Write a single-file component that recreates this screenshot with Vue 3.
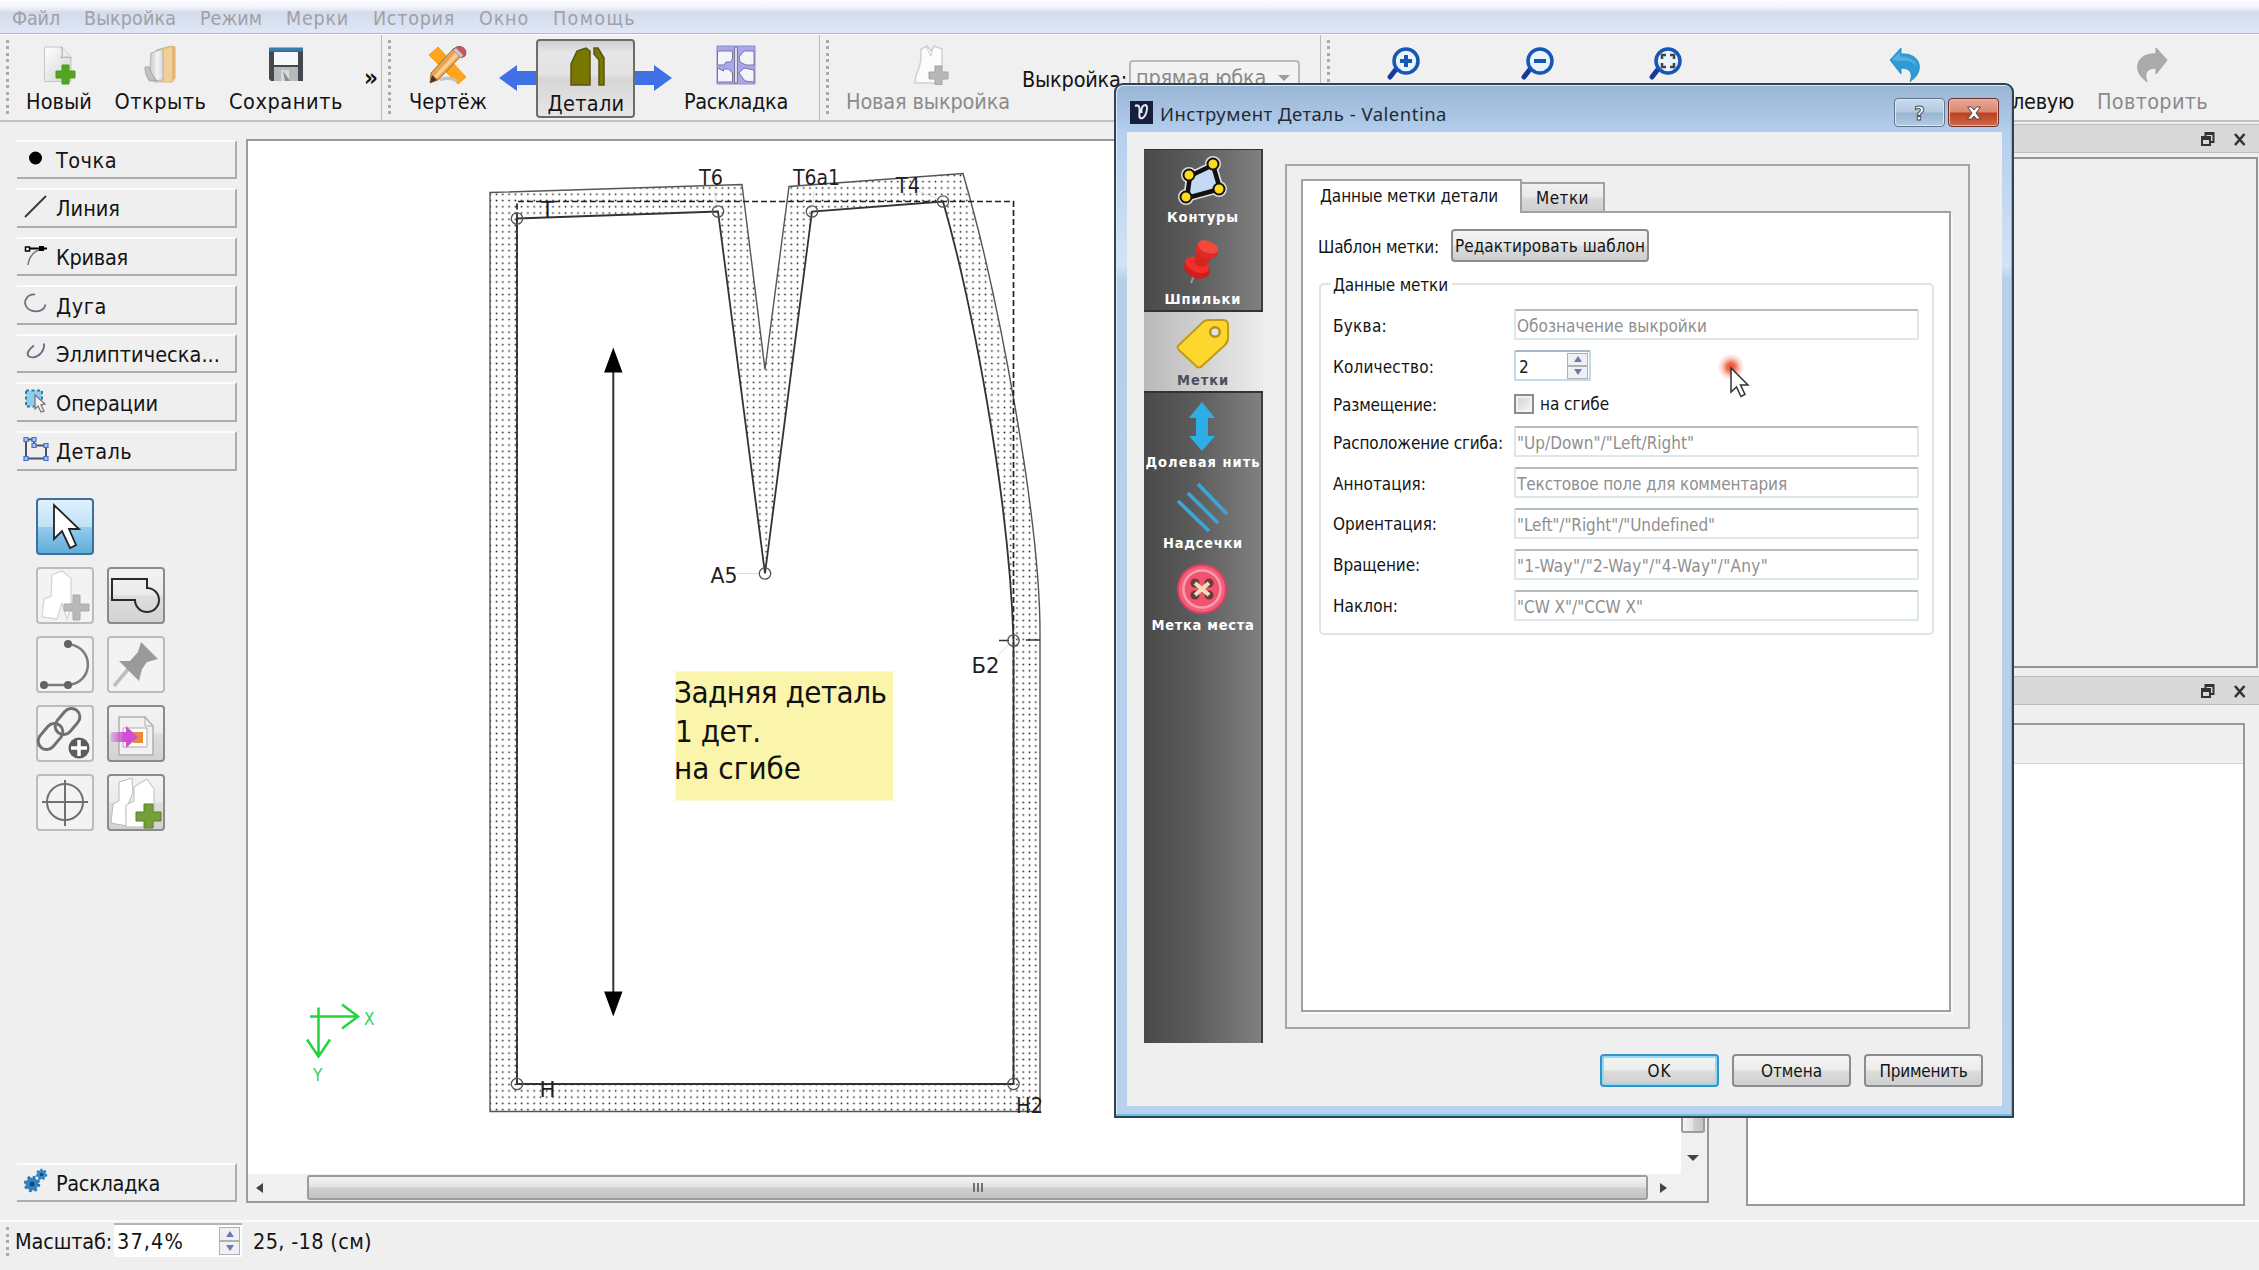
<script setup>
// Spreads the letters of a label so that it takes the given width.
const vFit = {
  mounted(el, { value }) {
    const range = document.createRange()
    range.selectNodeContents(el)
    const natural = range.getBoundingClientRect().width
    const n = el.textContent.length
    el.style.letterSpacing = ((value + 2 - natural) / Math.max(n, 1)).toFixed(3) + 'px'
  },
}

const menus = [
  ['Файл', 46], ['Выкройка', 90], ['Режим', 60], ['Мерки', 61],
  ['История', 80], ['Окно', 48], ['Помощь', 81],
]

const groups = [
  { id: 'point', label: 'Точка', w: 59 },
  { id: 'line', label: 'Линия', w: 62 },
  { id: 'curve', label: 'Кривая', w: 70 },
  { id: 'arc', label: 'Дуга', w: 49 },
  { id: 'ellipse', label: 'Эллиптическа...', w: 162 },
  { id: 'ops', label: 'Операции', w: 100 },
  { id: 'detail', label: 'Деталь', w: 74 },
]

const pages = [
  { id: 'paths', label: 'Контуры', w: 70 },
  { id: 'pins', label: 'Шпильки', w: 75 },
  { id: 'labels', label: 'Метки', w: 50, active: true },
  { id: 'grain', label: 'Долевая нить', w: 113 },
  { id: 'passmarks', label: 'Надсечки', w: 78 },
  { id: 'place', label: 'Метка места', w: 101 },
]

const fields = [
  { label: 'Расположение сгиба:', w: 168, hint: '"Up/Down"/"Left/Right"', hw: 175 },
  { label: 'Аннотация:', w: 91, hint: 'Текстовое поле для комментария', hw: 268 },
  { label: 'Ориентация:', w: 102, hint: '"Left"/"Right"/"Undefined"', hw: 196 },
  { label: 'Вращение:', w: 85, hint: '"1-Way"/"2-Way"/"4-Way"/"Any"', hw: 249 },
  { label: 'Наклон:', w: 63, hint: '"CW X"/"CCW X"', hw: 124 },
]

const outer = 'M490 192L742 184L765 369L789 186L963 173C1000 300 1040 520 1040 632V1111H490Z'
const inner = 'M517 218L718 211L765 573L812 211L943 201C970 295 1009 490 1013.500 640V1083.500H517Z'
const nodes = [[517, 218], [718, 211], [765, 573], [812, 211], [943, 201], [1013.5, 640], [1013.5, 1083.5], [517, 1083.5]]
const tags = [
  ['Т6', 699, 184.5, 24], ['Т6а1', 793, 184, 47], ['Т4', 896, 192, 24], ['Т', 541, 216.5, 13],
  ['А5', 710.5, 582, 27], ['Б2', 971.5, 672, 28], ['Н', 539.5, 1096, 16], ['Н2', 1016, 1112, 27],
]
</script>

<template>
  <div class="app">
    <nav class="menubar">
      <span v-for="[m, w] in menus" :key="m" v-fit="w" :style="{ width: w + 'px' }">{{ m }}</span>
    </nav>

    <header class="toolbar">
      <section class="bar bar-file">
        <i class="grip"></i>
        <div class="tool t-new">
          <svg width="40" height="40" viewBox="0 0 40 40">
            <defs>
              <linearGradient id="paper" x1="0" y1="0" x2="1" y2="1"><stop offset="0" stop-color="#fff" /><stop offset="1" stop-color="#cfd2d3" /></linearGradient>
              <linearGradient id="folder" x1="0" y1="0" x2="1" y2="0"><stop offset="0" stop-color="#f6d9a6" /><stop offset="1" stop-color="#e2b26c" /></linearGradient>
              <linearGradient id="sheets" x1="0" y1="0" x2="1" y2="0"><stop offset="0" stop-color="#c2c4c5" /><stop offset="0.600" stop-color="#f4f4f2" /><stop offset="1" stop-color="#d8d8d6" /></linearGradient>
            </defs>
            <path d="M5.500 2h17.500l9 10v24.500h-26.500z" fill="url(#paper)" stroke="#c4c6c6" />
            <path d="M22.500 2c1.500 5 1 8.500-.5 11 3-1 7-1.500 10.500 0" fill="#eee" stroke="#a5a7a7" />
            <path d="M23 20h7v6h6v7h-6v6h-7v-6h-6v-7h6z" fill="#52a51f" stroke="#4a9a1d" />
          </svg>
          <span v-fit="64">Новый</span>
        </div>
        <div class="tool t-open">
          <svg width="40" height="40" viewBox="0 0 40 40">
            <path d="M16 5l15-4 4 1v31l-3 4H14z" fill="url(#folder)" stroke="#dcb47c" />
            <path d="M11 8l12-4v31l-14 1z" fill="url(#sheets)" stroke="#b5b5b5" />
            <path d="M5 22h4l3 7 5 7-8-1c-3-4-4-8-4-13z" fill="#bfc1c2" stroke="#a5a5a5" />
            <path d="M24 5l8-3v34l-8 1z" fill="#f0cf98" />
          </svg>
          <span v-fit="90">Открыть</span>
        </div>
        <div class="tool t-save">
          <svg width="40" height="40" viewBox="0 0 40 40">
            <path d="M3 3h34v33h-32l-2-2z" fill="#43484f" />
            <path d="M3 2.500h34v4h-34z" fill="#3c7ba8" />
            <path d="M8 7h24v13h-24z" fill="#f7f8fb" />
            <path d="M8 22h24v14h-24z" fill="#b7babb" />
            <path d="M15 25h8v11h-8z" fill="#d8dada" /><path d="M17 26l7 10h-5z" fill="#8b8e90" />
          </svg>
          <span v-fit="112">Сохранить</span>
        </div>
        <b class="more">»</b>
      </section>

      <section class="bar bar-mode">
        <i class="grip"></i>
        <div class="tool t-draw">
          <svg width="40" height="40" viewBox="0 0 40 40">
            <path d="M10 2l28 30-8 7-29-29z" fill="#ffa51f" stroke="#f59a1a" />
            <path d="M12 35c6-3 12-2 17 1" fill="none" stroke="#c4c4c4" stroke-width="3" />
            <path d="M3 28l23-25 8 7-24 25-8 3z" fill="#e9a250" stroke="#8a6130" stroke-width=".8" />
            <path d="M6 31l23-25 3 3-23 24z" fill="#f8cf8c" />
            <path d="M2 38l2-8 5 5z" fill="#4c3327" />
            <path d="M27 3c4-4 14 0 10 8l-4 2-8-8z" fill="#c9545c" stroke="#a0505c" />
            <path d="M25 5l3-2 7 7-2 3z" fill="#c4c8d2" />
          </svg>
          <span v-fit="76">Чертёж</span>
        </div>
        <svg class="arrow a-left" width="37" height="26" viewBox="0 0 37 26"><path d="M0 13L18 0v6h19v14H18v6z" fill="#4070e5" /></svg>
        <div class="tool checked">
          <svg width="40" height="40" viewBox="0 0 40 40">
            <path d="M3 38V17L9 4l9-3 4 3v34zM26 1h4l6 10v27h-5V13l-5-6z" fill="#787800" stroke="#55561a" stroke-width="1.500" />
          </svg>
          <span v-fit="75">Детали</span>
        </div>
        <svg class="arrow" width="37" height="26" viewBox="0 0 37 26"><path d="M37 13L19 0v6H0v14h19v6z" fill="#4070e5" /></svg>
        <div class="tool t-layout">
          <svg width="40" height="40" viewBox="0 0 40 40">
            <path d="M1 1h38v38H1z" fill="#a9a5f2" stroke="#8f8cc8" />
            <g fill="#f4f4fa" stroke="#777893">
              <path d="M1.500 6h15v8l-2 3H10l-2 3H1.500zM1.500 23l6 3v-2h5l4 4v9H1.500zM23 12l5-6h10v14h-8l-6-3zM23 28l5-5 10 2v12l-9-1-3-4z" />
              <path d="M18.500 2h3v36h-3z" fill="#ddd" />
            </g>
          </svg>
          <span v-fit="102">Раскладка</span>
        </div>
      </section>

      <section class="bar bar-draw">
        <i class="grip"></i>
        <div class="tool t-piece off">
          <svg width="40" height="40" viewBox="0 0 40 40">
            <path d="M10 4l6-3 4 5 3-5 8 3v18l-6 16H4l1-8c4-6 3-10 5-14z" fill="#fcfcfc" stroke="#d0d0d0" stroke-width="1.500" />
            <path d="M15 2l5 9 2-9" fill="none" stroke="#ccc" />
            <path d="M24 21h7v6h6v7h-6v6h-7v-6h-6v-7h6z" fill="#b7b7b7" stroke="#a3a3a3" />
          </svg>
          <span v-fit="162">Новая выкройка</span>
        </div>
        <span class="pick" v-fit="103">Выкройка:</span>
        <div class="combo"><span v-fit="128">прямая юбка</span><i class="tri-down"></i></div>
      </section>

      <section class="bar bar-zoom">
        <i class="grip"></i>
        <div class="tool z-in">
          <svg width="40" height="40" viewBox="0 0 40 40">
            <path d="M13 23L6 32" stroke="#153a97" stroke-width="5" stroke-linecap="round" />
            <circle cx="22" cy="16" r="12" fill="#e9f3fc" stroke="#1757b4" stroke-width="3.500" />
            <path d="M22 10v12M16 16h12" stroke="#1757b4" stroke-width="4" />
          </svg>
        </div>
        <div class="tool z-out">
          <svg width="40" height="40" viewBox="0 0 40 40">
            <path d="M13 23L6 32" stroke="#153a97" stroke-width="5" stroke-linecap="round" />
            <circle cx="22" cy="16" r="12" fill="#e9f3fc" stroke="#1757b4" stroke-width="3.500" />
            <path d="M16 16h12" stroke="#1757b4" stroke-width="4" />
          </svg>
        </div>
        <div class="tool z-fit">
          <svg width="40" height="40" viewBox="0 0 40 40">
            <path d="M13 23L6 32" stroke="#153a97" stroke-width="5" stroke-linecap="round" />
            <circle cx="22" cy="16" r="12" fill="#e9f3fc" stroke="#1757b4" stroke-width="3.500" />
            <path d="M16 14v-4h4M24 10h4v4M28 18v4h-4M20 22h-4v-4" fill="none" stroke="#444" stroke-width="2.500" />
          </svg>
        </div>
        <div class="tool undo">
          <svg width="40" height="40" viewBox="0 0 40 40">
            <path d="M5 15L16 3v6c13-1 20 7 18 16-2 7-5 8-9 12 3-8 1-14-9-14v6z" fill="#2f9bd6" stroke="#2b8fc8" />
            <path d="M7 15l8-8v5c9-1 15 4 17 9-5-5-10-6-17-5z" fill="#55b0e0" />
          </svg>
        </div>
        <div class="tool next"><span v-fit="60">левую</span></div>
        <div class="tool off redo">
          <svg width="40" height="40" viewBox="0 0 40 40">
            <path d="M35 15L24 3v6C11 8 4 16 6 25c2 7 5 8 9 12-3-8-1-14 9-14v6z" fill="#ababab" stroke="#a0a0a0" />
          </svg>
          <span v-fit="109">Повторить</span>
        </div>
      </section>
    </header>

    <main class="work">
      <aside class="tools">
        <div v-for="g in groups" :key="g.id" class="group">
          <svg width="26" height="26" viewBox="0 0 26 26" fill="none">
            <circle v-if="g.id === 'point'" cx="12.500" cy="13" r="6.500" fill="#000" />
            <path v-else-if="g.id === 'line'" d="M2 24L23 3" stroke="#333" stroke-width="1.800" />
            <g v-else-if="g.id === 'curve'">
              <path d="M4 6.500h20" stroke="#000" stroke-width="2" /><path d="M5 23c1-7 5-14 14-16" stroke="#777" stroke-width="1.500" />
              <path d="M2.500 5h4v4h-4z" fill="#fff" stroke="#000" stroke-width="1.500" /><path d="M16 4h5v5h-5z" fill="#000" />
            </g>
            <path v-else-if="g.id === 'arc'" d="M12 3.500C4 3 1 10 2.500 14c3 8 18 9 20-.5" stroke="#66707f" stroke-width="1.700" />
            <path v-else-if="g.id === 'ellipse'" d="M11 6.500C5 11 3 15 6 17.500c6 3 16-3 15-13" stroke="#66748a" stroke-width="1.900" />
            <g v-else-if="g.id === 'ops'">
              <path d="M3 2.500h16v16H3z" fill="#8dcdee" stroke="#2c7ea6" stroke-width="2" stroke-dasharray="3 2.500" />
              <path d="M12 7l10 9-4 1 3 6-3 1-3-6-3 3z" fill="#f2f2f2" stroke="#777" stroke-width="1.300" />
            </g>
            <g v-else>
              <path d="M3 3.500h8v6h12v13H3z" stroke="#4c5264" stroke-width="2" />
              <path d="M1 1.500h4v4H1zM9 1.500h4v4H9zM9 7.500h4v4H9zM21 7.500h4v4h-4zM21 20.500h4v4h-4zM1 20.500h4v4H1z" fill="#a9c8ff" stroke="#3b6fd4" stroke-width="1.200" />
            </g>
          </svg>
          <span v-fit="g.w">{{ g.label }}</span>
        </div>

        <div class="palette">
          <div class="cell on">
            <svg width="58" height="57" viewBox="0 0 58 57"><path d="M18 7v34l8-8 8 17 6-3-7-16h10z" fill="#fff" stroke="#222" stroke-width="1.800" /></svg>
          </div>
          <i></i>
          <div class="cell dis">
            <svg width="58" height="57" viewBox="0 0 58 57">
              <path d="M16 8l10-4 9 7v30l-4 11-5-16-5 16-15-2 2-18 7-3z" fill="#fff" stroke="#d5d5d5" stroke-width="1.300" />
              <path d="M37 28h7v9h9v7h-9v9h-7v-9h-9v-7h9z" fill="#b9b9b9" stroke="#aaa" />
            </svg>
          </div>
          <div class="cell">
            <svg width="58" height="57" viewBox="0 0 58 57"><path d="M5 12h35v9a12 12 0 1 1-12 12H5z" fill="none" stroke="#2a2a2a" stroke-width="2" /></svg>
          </div>
          <div class="cell dis">
            <svg width="58" height="57" viewBox="0 0 58 57">
              <path d="M7 49h25c26-2 27-38 0-41" fill="none" stroke="#7d7d7d" stroke-width="2.500" />
              <circle cx="8" cy="49" r="4" fill="#636363" /><circle cx="32" cy="49" r="4" fill="#636363" /><circle cx="32" cy="8" r="4" fill="#636363" />
            </svg>
          </div>
          <div class="cell dis">
            <svg width="58" height="57" viewBox="0 0 58 57">
              <path d="M7 50l16-19" stroke="#bdbdbd" stroke-width="3.500" />
              <path d="M34 6l17 17-11 3-5 7-3 12L12 25h11l8-9z" fill="#9a9a9a" />
            </svg>
          </div>
          <div class="cell dis">
            <svg width="58" height="57" viewBox="0 0 58 57" fill="none" stroke="#707070" stroke-width="3">
              <rect x="17" y="8" width="29" height="17" rx="8.500" transform="rotate(-50 31.500 16.500)" />
              <rect x="0" y="23" width="29" height="17" rx="8.500" transform="rotate(-50 14.500 31.500)" />
              <circle cx="43" cy="43" r="10.500" fill="#5c5c5c" stroke="none" />
              <path d="M43 35v16M35 43h16" stroke="#fff" stroke-width="3.500" />
            </svg>
          </div>
          <div class="cell">
            <svg width="58" height="57" viewBox="0 0 58 57">
              <defs><linearGradient id="import" x1="0" y1="0" x2="1" y2="0"><stop offset="0" stop-color="#cf4fd0" stop-opacity="0.300" /><stop offset="0.500" stop-color="#cf4fd0" /></linearGradient></defs>
              <path d="M12 12h26l8 9v29H12z" fill="#f1f1f1" stroke="#b0b0b0" stroke-width="1.500" /><path d="M38 12v9h8" fill="none" stroke="#aaa" />
              <path d="M16 23h24v19H16z" fill="#fff" stroke="#aaa" /><path d="M26 27h10v11H26z" fill="#e88a3a" />
              <path d="M4 27h15v-6l12 11-12 11v-6H4z" fill="url(#import)" />
            </svg>
          </div>
          <div class="cell dis">
            <svg width="58" height="57" viewBox="0 0 58 57" fill="none" stroke="#707070" stroke-width="2"><circle cx="29" cy="28" r="18" /><path d="M29 6v46M6 28h46" /></svg>
          </div>
          <div class="cell">
            <svg width="58" height="57" viewBox="0 0 58 57">
              <path d="M12 8l13-4 1 14-7 18 1 16-16-3 2-19 6-3z" fill="#fff" stroke="#bbb" />
              <path d="M27 13l13-8 7 10v38H19V31l8-4z" fill="#fff" stroke="#bbb" />
              <path d="M37 30h9v8h8v9h-8v7h-9v-7h-8v-9h8z" fill="#74a03a" stroke="#58802a" />
            </svg>
          </div>
        </div>

        <div class="group last">
          <svg width="26" height="26" viewBox="0 0 26 26">
            <circle cx="9" cy="16" r="6.500" fill="#2f86cb" stroke="#2a78b8" stroke-width="3.500" stroke-dasharray="2.600 2.500" />
            <circle cx="9" cy="16" r="2.500" fill="#27455f" />
            <circle cx="18.500" cy="6.500" r="4.500" fill="#3a8ccb" stroke="#2f7fbd" stroke-width="2.500" stroke-dasharray="2 1.900" />
            <circle cx="18.500" cy="6.500" r="1.700" fill="#27455f" />
          </svg>
          <span v-fit="102">Раскладка</span>
        </div>
      </aside>

      <section class="canvas">
        <svg class="scene" width="1433" height="1033" viewBox="248 140.500 1433 1033">
          <defs>
            <pattern id="dots" x="493.400" y="190.600" width="6.270" height="6.270" patternUnits="userSpaceOnUse">
              <rect x="2.400" y="2.400" width="1.500" height="1.500" fill="#111" />
            </pattern>
          </defs>
          <path :d="outer + inner" fill="url(#dots)" fill-rule="evenodd" />
          <path :d="outer" fill="none" stroke="#555" stroke-width="1.400" />
          <path d="M517 218V201H1013.500V1083.500H517V218" fill="none" stroke="#222" stroke-width="1.700" stroke-dasharray="6 3" />
          <path :d="inner" fill="none" stroke="#333" stroke-width="1.800" />
          <path d="M737 573h22M998 655l11-11M714 190l3 15M814 190l-1 15M917 190l20 8" stroke="#ddd" />
          <path d="M999 640h10M1026 639.500h14" stroke="#333" stroke-width="1.500" />
          <circle v-for="(n, i) in nodes" :key="i" :cx="n[0]" :cy="n[1]" r="5.700" fill="none" stroke="#555" stroke-width="1.300" />
          <path d="M613.300 369V994" stroke="#333" stroke-width="2" />
          <path d="M613.300 347l9.200 25h-18.400zM613.300 1016l9.200-25h-18.400z" />
          <text v-for="t in tags" :key="t[0]" :x="t[1]" :y="t[2]" :textLength="t[3]" lengthAdjust="spacingAndGlyphs" class="tag">{{ t[0] }}</text>

          <rect x="675.500" y="671" width="217.500" height="129" fill="#faf5ab" />
          <g class="note">
            <text x="674" y="702" textLength="213">Задняя деталь</text>
            <text x="675" y="741" textLength="86">1 дет.</text>
            <text x="674" y="778.500" textLength="127">на сгибе</text>
          </g>

          <g fill="none" stroke="#1fd63b" stroke-width="2.500">
            <path d="M310 1016h47M318.500 1007v48M342 1004l16 12-16 12M307 1039l11.500 17 11.500-17" />
          </g>
          <text x="364" y="1024" class="axis">X</text>
          <text x="313" y="1080" class="axis">Y</text>
        </svg>
        <div class="vscroll"><div class="vthumb"></div><i class="tri-down dark"></i></div>
        <div class="hscroll">
          <i class="tri-left"></i>
          <div class="hthumb"><i></i><i></i><i></i></div>
          <i class="tri-right"></i>
        </div>
        <div class="corner"></div>
      </section>

      <aside class="docks">
        <div class="dock-title">
          <svg width="60" height="20" viewBox="0 0 60 20"><path d="M5.500 7V4h8v9h-3M2 8h8v8H2zM2 10h8M5.500 5h8" fill="none" stroke="#333" stroke-width="2" /><path d="M35 5l9.500 11M44.500 5L35 16" stroke="#333" stroke-width="2.600" /></svg>
        </div>
        <div class="dock-view"></div>
        <div class="dock-title">
          <svg width="60" height="20" viewBox="0 0 60 20"><path d="M5.500 7V4h8v9h-3M2 8h8v8H2zM2 10h8M5.500 5h8" fill="none" stroke="#333" stroke-width="2" /><path d="M35 5l9.500 11M44.500 5L35 16" stroke="#333" stroke-width="2.600" /></svg>
        </div>
        <div class="dock-table"><div class="dock-head"></div></div>
      </aside>
    </main>

    <footer class="status">
      <i class="grip"></i>
      <span v-fit="95" class="scale">Масштаб:</span>
      <div class="spin"><span v-fit="65">37,4%</span><div class="steps"><b><i class="up"></i></b><b><i class="down"></i></b></div></div>
      <span v-fit="117" class="pos">25, -18 (см)</span>
    </footer>

    <div class="dialog">
      <div class="caption">
        <svg width="23" height="23" viewBox="0 0 23 23">
          <rect width="23" height="23" fill="#16203c" />
          <path d="M5 5c4-2 5 1 4.500 6-.5 5 0 7 3 6 4-2 6-12 3-13-3 0-4.500 3-4 8" fill="none" stroke="#e8eaf0" stroke-width="2" />
        </svg>
        <span v-fit="285">Инструмент Деталь - Valentina</span>
        <b class="cbtn help">?</b>
        <b class="cbtn close"><svg width="16" height="14" viewBox="0 0 16 14"><path d="M1.500 1h4L8 4l2.500-3h4L10 7l4.500 6h-4L8 10l-2.500 3h-4L6 7z" fill="#fff" stroke="#5b4444" /></svg></b>
      </div>

      <div class="body">
        <div class="content">
          <div class="pages">
            <div v-for="p in pages" :key="p.id" class="page" :class="{ active: p.active }">
              <svg width="54" height="52" viewBox="0 0 54 52" fill="none">
                <g v-if="p.id === 'paths'" stroke-linejoin="round">
                  <path d="M15 21L38 10l7 24-33 9z" stroke="#ddd" stroke-width="8" />
                  <g fill="#ddd"><circle cx="38" cy="9" r="8" /><circle cx="14" cy="20" r="8" /><circle cx="44" cy="34" r="8" /><circle cx="11" cy="42" r="8" /></g>
                  <path d="M15 21L38 10l7 24-33 9z" fill="#c3d9f4" stroke="#111" stroke-width="4.500" />
                  <g fill="#ffd91c" stroke="#111" stroke-width="2"><circle cx="38" cy="9" r="5.500" /><circle cx="14" cy="20" r="5.500" /><circle cx="44" cy="34" r="5.500" /><circle cx="11" cy="42" r="5.500" /></g>
                </g>
                <g v-else-if="p.id === 'pins'">
                  <path d="M20 36l-4 10" stroke="#999" stroke-width="2" />
                  <path d="M10 26c2-6 9-6 15-3s11 8 10 12c-2 8-15 9-22 2-4-4-5-7-3-11z" fill="#cf1f1c" />
                  <ellipse cx="22" cy="28" rx="12.500" ry="7" transform="rotate(24 22 28)" fill="#ee2f2a" />
                  <path d="M22 12L19 25c3 5 8 6 12 4l7-10z" fill="#d8241f" />
                  <ellipse cx="32" cy="13" rx="11.500" ry="8" transform="rotate(22 32 13)" fill="#dc2a25" />
                  <ellipse cx="33" cy="10" rx="10.500" ry="6" transform="rotate(22 33 10)" fill="#f4483f" />
                </g>
                <g v-else-if="p.id === 'labels'">
                  <path d="M3 29L28 5c2-2 4-2 6-2h14c3 0 5 2 5 5v13c0 3-1 5-3 7L27 49c-2 2-4 2-6 0L4 33c-1-1-2-3-1-4z" fill="#fdd62e" stroke="#c39a16" stroke-width="2" />
                  <circle cx="40" cy="15" r="4.800" fill="#e4e4e4" stroke="#b88f1d" stroke-width="2.500" />
                </g>
                <path v-else-if="p.id === 'grain'" d="M27 2l13 16h-7v18h7L27 51 14 36h7V18h-7z" fill="#2eaee6" />
                <path v-else-if="p.id === 'passmarks'" d="M23 3l29 30M13 12l30 30M3 20l31 30" stroke="#3ba6d3" stroke-width="3.800" />
                <g v-else>
                  <circle cx="27" cy="26" r="24" fill="#f2607c" stroke="#dc3f62" stroke-width="2" />
                  <circle cx="27" cy="26" r="18.500" fill="#f0526f" stroke="#fb9dac" stroke-width="2.500" />
                  <g fill="#693a40"><circle cx="20" cy="20" r="4.500" /><circle cx="34" cy="20" r="4.500" /><circle cx="20" cy="32" r="4.500" /><circle cx="34" cy="32" r="4.500" /></g>
                  <path d="M20 20l14 12M34 20L20 32" stroke="#f3dfb4" stroke-width="4" />
                </g>
              </svg>
              <span v-fit="p.w">{{ p.label }}</span>
            </div>
          </div>

          <div class="frame">
            <div class="tabs">
              <div class="tab current"><span v-fit="176">Данные метки детали</span></div>
              <div class="tab"><span v-fit="51">Метки</span></div>
            </div>
            <div class="sheet">
              <div class="template">
                <span v-fit="119">Шаблон метки:</span>
                <button class="edit"><span v-fit="188">Редактировать шаблон</span></button>
              </div>
              <div class="box">
                <div class="legend"><span v-fit="113">Данные метки</span></div>
                <div class="row">
                  <label><span v-fit="52">Буква:</span></label>
                  <div class="input"><span v-fit="188">Обозначение выкройки</span></div>
                </div>
                <div class="row r-count">
                  <label><span v-fit="99">Количество:</span></label>
                  <div class="input count"><span>2</span><div class="steps"><b><i class="up"></i></b><b><i class="down"></i></b></div></div>
                </div>
                <div class="row r-check">
                  <label><span v-fit="102">Размещение:</span></label>
                  <i class="check"></i><span v-fit="67">на сгибе</span>
                </div>
                <div v-for="f in fields" :key="f.label" class="row">
                  <label><span v-fit="f.w">{{ f.label }}</span></label>
                  <div class="input"><span v-fit="f.hw">{{ f.hint }}</span></div>
                </div>
              </div>
            </div>
          </div>
        </div>

        <div class="actions">
          <button class="default"><span v-fit="22">OK</span></button>
          <button><span v-fit="59">Отмена</span></button>
          <button><span v-fit="86">Применить</span></button>
        </div>
      </div>
    </div>

    <div class="click"></div>
    <svg class="pointer" width="20" height="32" viewBox="0 0 20 32"><path d="M1 1v24l5.500-5 4.500 9.500 4-2-4.500-9.500H18z" fill="#fff" stroke="#333" stroke-width="1.500" /></svg>
  </div>
</template>

<style>
body { margin: 0; background: #efefef; }
</style>

<style scoped>
.app {
  position: relative;
  display: flex;
  flex-direction: column;
  width: 2259px;
  height: 1270px;
  overflow: hidden;
  background: #efefef;
  color: #141414;
  font: 21.5px/26px "DejaVu Sans Condensed", "DejaVu Sans", sans-serif;
  font-stretch: condensed;
  white-space: nowrap;
}
svg { display: block; flex: none; }
span { white-space: pre; }
i { flex: none; }

.menubar {
  box-sizing: border-box;
  display: flex;
  gap: 26px;
  height: 34px;
  padding: 6px 0 0 12px;
  border-bottom: 1px solid #b4b8c6;
  background: linear-gradient(#fdfeff 0, #f3f6fc 6px, #e4e9f4 10px, #d4dbeb 12px, #d8dfef 20px, #e0e7f6 33px);
  color: #a0a1a5;
  font-size: 19.500px;
}

.toolbar {
  box-sizing: border-box;
  display: flex;
  height: 88px;
  border-top: 1px solid #fff;
  border-bottom: 2px solid #c2c2c2;
  background: #f0f0f0;
}
.bar {
  box-sizing: border-box;
  position: relative;
  display: flex;
  align-items: flex-start;
  padding-top: 10px;
  border-right: 1px solid #b9b9b9;
}
.bar-file { width: 382px; }
.bar-mode { width: 438px; }
.bar-draw { width: 501px; }
.bar-zoom { width: 938px; border-right: 0; }
.grip {
  width: 3px;
  height: 76px;
  margin: -5px 0 0 6px;
  background: repeating-linear-gradient(#a9a9a9 0 3px, transparent 3px 6.500px);
}
.tool {
  display: flex;
  flex-direction: column;
  align-items: center;
  gap: 4px;
}
.tool span { margin: 0 -1px 0 0; }
.off { color: #8b8b8b; }
.t-new { width: 65px; margin-left: 17px; }
.t-open { width: 92px; margin-left: 23px; }
.t-save { width: 113px; margin-left: 23px; }
.more { margin: 20px 0 0 22px; font-size: 24px; line-height: 26px; font-weight: 700; }
.t-draw { width: 77px; margin-left: 18px; }
.arrow { margin-top: 20px; }
.a-left { margin-left: 13px; }
.checked {
  box-sizing: border-box;
  width: 99px;
  height: 79px;
  margin-top: -6px;
  padding-top: 6px;
  border: 2px solid #6c6c6c;
  border-radius: 4px;
  background: linear-gradient(#cfcfcf, #e6e6e6 12px, #e3e3e3 45%, #d6d6d6 50%, #e6e6e6);
}
.checked svg { margin-left: 4px; }
.t-layout { width: 103px; margin-left: 12px; }
.t-piece { width: 163px; margin-left: 17px; }
.t-piece svg { margin-left: 6px; }
.pick { margin: 22px 0 0 13px; width: 105px; }
.combo {
  box-sizing: border-box;
  display: flex;
  justify-content: space-between;
  width: 171px;
  height: 36px;
  margin: 15px 0 0 2px;
  padding: 3px 8px 0 5px;
  border: 2px solid #b9b9b9;
  border-radius: 4px;
  background: #f3f3f3;
  color: #8b8b8b;
}
.tri-down { width: 0; height: 0; margin-top: 10px; border: 6px solid transparent; border-top-color: #9c9c9c; border-bottom: 0; }
.z-in { margin-left: 54px; }
.z-out { margin-left: 94px; }
.z-fit { margin-left: 88px; }
.undo { margin-left: 199px; }
.next { width: 61px; margin: 44px 0 0 87px; }
.redo { width: 110px; margin-left: 24px; }

.work { display: flex; height: 1098px; }
.tools {
  box-sizing: border-box;
  display: flex;
  flex-direction: column;
  width: 246px;
  padding: 17.500px 0 0 17px;
}
.group {
  box-sizing: border-box;
  display: flex;
  align-items: center;
  width: 220px;
  height: 39.600px;
  margin-bottom: 9px;
  padding-left: 6px;
  border: solid;
  border-width: 2px 2px 2px 0;
  border-color: #fcfcfc #adadad #adadad;
}
.group svg { margin-top: -3px; }
.group span { margin: 3px 0 0 7px; }
.palette {
  display: grid;
  grid-template-columns: 58px 58px;
  gap: 12px 13px;
  margin: 18px 0 0 19px;
}
.cell {
  box-sizing: border-box;
  width: 58px;
  height: 57px;
  border: 2px solid #8b8b8b;
  border-radius: 4px;
  background: linear-gradient(#f3f3f3, #ebebeb 48%, #dddddd 52%, #d2d2d2);
}
.cell svg { margin: -2px; }
.dis { border-color: #bcbcbc; background: #f3f3f3; }
.on { border-color: #3d6f9b; background: linear-gradient(#dff1fc, #c0e2f7 50%, #94cbef 52%, #62add9); }
.last { margin-top: 332px; }

.canvas {
  box-sizing: border-box;
  display: grid;
  grid-template: 1033px 27px / 1433px 26px;
  width: 1463px;
  height: 1064px;
  margin-top: 17px;
  border: 2px solid #96979d;
  border-left: 2px solid #9d9ea4;
  background: #fff;
}
.scene { overflow: hidden; }
.tag { font-size: 21.500px; fill: #1f1f1f; }
.note { font-size: 31px; fill: #111; }
.axis { font-size: 17px; fill: #35d05a; }
.vscroll {
  display: flex;
  flex-direction: column;
  align-items: center;
  justify-content: space-between;
  background: #f0f0f0;
}
.vthumb {
  box-sizing: border-box;
  width: 24px;
  height: 992px;
  margin-right: 2px;
  border: 2px solid #9c9c9c;
  border-radius: 3px;
  background: linear-gradient(90deg, #f4f4f4, #e2e2e3 48%, #cfcfd2 52%, #c3c3c6);
}
.dark { margin: 0 2px 13px 0; border-top-color: #444; }
.hscroll { display: flex; align-items: center; background: #f0f0f0; }
.hthumb {
  box-sizing: border-box;
  display: flex;
  gap: 2px;
  align-items: center;
  justify-content: center;
  width: 1341px;
  height: 25px;
  margin: 0 12px 0 44px;
  border: 2px solid #9c9c9c;
  border-radius: 3px;
  background: linear-gradient(#f4f4f4, #e2e2e3 48%, #cfcfd2 52%, #c3c3c6);
}
.hthumb i { width: 2px; height: 9px; background: #707070; }
.tri-left, .tri-right { width: 0; height: 0; border: 5px solid transparent; }
.tri-left { margin-left: 4px; border-right: 7px solid #444; border-left: 0; }
.tri-right { border-left: 7px solid #444; border-right: 0; }
.hscroll .tri-left { margin: 0 5px 0 8px; }
.hscroll .hthumb { margin-left: 39px; }
.corner { background: #f0f0f0; }

.docks { display: flex; flex-direction: column; width: 540px; margin: 2px 0 0 10px; }
.dock-title {
  box-sizing: border-box;
  display: flex;
  align-items: center;
  justify-content: flex-end;
  height: 29px;
  border: solid #bdbdbd;
  border-width: 1px 0;
  background: #d9d9d9;
}
.dock-title svg { margin-right: -1px; }
.dock-view {
  box-sizing: border-box;
  height: 511px;
  margin: 4px 1px 8px 0;
  border: 2px solid #8f9499;
  background: #efefef;
}
.dock-table {
  box-sizing: border-box;
  height: 483px;
  margin: 18px 14px 0 27px;
  border: 2px solid #95989c;
  background: #fff;
}
.dock-head { height: 38px; border-bottom: 1px solid #d4d4d4; background: #efefef; }

.status {
  display: flex;
  align-items: flex-start;
  height: 50px;
  box-sizing: border-box;
  border-top: 2px solid #fafafa;
}
.status .grip { height: 29px; margin-top: 5px; }
.status > span { margin-top: 7px; }
.scale { width: 98px; margin-left: 6px; }
.spin {
  box-sizing: border-box;
  display: flex;
  justify-content: space-between;
  width: 128px;
  height: 34px;
  margin: 1px 0 0 1px;
  padding: 2px 2px 0 3px;
  border-top: 2px solid #b4b4b4;
  background: #fff;
}
.spin > span { margin-top: 2px; }
.steps { display: flex; flex-direction: column; width: 21px; height: 28px; }
.steps b {
  box-sizing: border-box;
  display: flex;
  flex: 1;
  align-items: center;
  justify-content: center;
  border: 1px solid #aeb0b4;
  background: #eff0f3;
}
.up, .down { width: 0; height: 0; border: 4px solid transparent; }
.up { border-bottom: 6px solid #6b78b4; border-top: 0; }
.down { border-top: 6px solid #6b78b4; border-bottom: 0; }
.pos { margin-left: 11px; }

.dialog {
  box-sizing: border-box;
  position: absolute;
  left: 1114px;
  top: 83px;
  width: 900px;
  height: 1035px;
  padding: 0 10px 10px 11px;
  border: 2px solid #2f4352;
  border-radius: 9px 9px 0 0;
  background: linear-gradient(#9bb6d4, #a9c4e4 30px, #b5cfee 48px, #d2e3f5 180px, #b7d0ea 195px, #b9d1ec);
  box-shadow: inset -1px -2px 0 #67c3e6, inset 1px 1px 0 #dbe9f7;
  font-size: 17px;
  line-height: 20px;
}
.caption {
  display: flex;
  align-items: flex-start;
  height: 47px;
  padding-top: 17px;
  box-sizing: border-box;
}
.caption > svg { margin: -1px 0 0 3px; }
.caption > span {
  width: 734px;
  margin: 0 0 0 7px;
  color: #222a36;
  font: 18.5px/24px "Noto Sans", "Open Sans", sans-serif;
}
.cbtn {
  box-sizing: border-box;
  display: flex;
  align-items: center;
  justify-content: center;
  width: 51px;
  height: 29px;
  margin: -4px 3px 0 0;
  border: 1px solid #61748a;
  border-radius: 4px;
  background: linear-gradient(#c9daec, #b4cae2 48%, #98b3d1 52%, #b3cce6);
  box-shadow: inset 0 0 0 1px #dbe7f3;
  color: #fff;
  font-size: 20px;
  -webkit-text-stroke: 1px #4a4f58;
}
.caption .close {
  width: 51px;
  margin-right: 0;
  border-color: #67302b;
  background: linear-gradient(#e6a797, #d98972 48%, #bd3f1e 52%, #cf6a4c);
  box-shadow: inset 0 0 0 1px #eab8aa;
}
.body {
  box-sizing: border-box;
  height: 974px;
  padding: 17px 0 0 17px;
  background: #efefef;
}
.content { display: flex; height: 894px; }
.pages {
  box-sizing: border-box;
  width: 119px;
  height: 894px;
  border-right: 2px solid #3d3d3d;
  border-top: 1px solid #333;
  background: linear-gradient(90deg, #4a4a4a, #5a5a5a 40%, #808080);
}
.page {
  box-sizing: border-box;
  display: flex;
  flex-direction: column;
  align-items: center;
  height: 81.500px;
  padding-top: 5px;
  color: #fff;
  font-size: 14.500px;
  font-weight: 700;
  line-height: 18px;
}
.page svg { margin-left: -1px; }
.page span { margin: 1px -5px 0 -4px; }
.active {
  width: 119px;
  height: 80.500px;
  margin: -1px 0 2px;
  border: solid #333;
  border-width: 0 0 2px;
  box-shadow: 0 -2px 0 #333;
  background: linear-gradient(90deg, #b9b9b9, #ececec);
  color: #4a4f5b;
}
.active svg { margin-left: -3px; }
.active span { margin: 2px -3px 0 -4px; }
.frame {
  box-sizing: border-box;
  width: 685px;
  height: 865px;
  margin: 15px 0 0 22px;
  padding: 13px 0 0 14px;
  border: 2px solid #a5a6ab;
}
.tabs { display: flex; align-items: flex-end; height: 32px; }
.tab {
  box-sizing: border-box;
  display: flex;
  justify-content: center;
  width: 83px;
  height: 29px;
  padding-top: 4px;
  border: 2px solid #a0a1a5;
  border-width: 2px 2px 0 0;
  background: linear-gradient(#f1f1f1, #e8e8e8 48%, #dadada 52%, #cfcfcf);
}
.current {
  position: relative;
  width: 221px;
  height: 34px;
  margin-bottom: -2px;
  padding: 5px 5px 0 0;
  border-width: 2px;
  border-bottom: 0;
  background: #fff;
}
.sheet {
  box-sizing: border-box;
  width: 650px;
  height: 801px;
  padding: 16px 14px 0 15px;
  border: 2px solid #a0a1a5;
  background: #fff;
  box-shadow: 2px 2px 0 #f8f8f8;
}
.template { display: flex; align-items: center; height: 33px; }
.template > span { width: 133px; margin-top: 2px; }
button {
  box-sizing: border-box;
  display: flex;
  align-items: center;
  justify-content: center;
  width: 119px;
  height: 33px;
  padding: 1px 0 0;
  border: 2px solid #8b8c8f;
  border-radius: 4px;
  background: linear-gradient(#f4f4f4, #ececec 48%, #dcdcdc 52%, #cfcfcf);
  color: #141414;
  font: inherit;
  white-space: nowrap;
}
.edit { width: 198px; }
.default { border: 2px solid #3793c6; box-shadow: inset 0 0 0 2px #8fdcf8; }
.box {
  box-sizing: border-box;
  width: 615px;
  height: 352px;
  margin: 21px 0 0 1px;
  padding-left: 12px;
  border: 2px solid #dfe5e6;
  border-radius: 5px;
}
.legend { width: 119px; height: 20px; margin: -10px 0 14px -2px; padding-left: 2px; background: #fff; }
.row { display: flex; align-items: center; height: 31px; margin-bottom: 9.800px; }
.r-count { margin: 10.400px 0 13px; }
.r-check { height: 20px; margin-bottom: 12px; }
.row label { width: 181px; padding-top: 2px; }
.r-check label { padding-top: 1px; }
.input {
  box-sizing: border-box;
  display: flex;
  align-items: center;
  width: 405px;
  height: 31px;
  padding: 3px 0 0 1px;
  border: 2px solid #dde6e8;
  border-top-color: #b5bcc0;
  border-radius: 2px;
  color: #8f8f8f;
}
.count { justify-content: space-between; width: 77px; padding: 0 1px 0 3px; border-color: #a7b8c5 #c6dae6 #c6dae6; color: #222; }
.count > span { margin-top: 3px; }
.count .steps { height: 26px; }
.check {
  box-sizing: border-box;
  width: 20px;
  height: 20px;
  margin-right: 6px;
  border: 2px solid #8b8c8f;
  background: linear-gradient(135deg, #cfd1d4, #f7f7f7);
  box-shadow: inset 0 0 0 2px #f2f2f2;
}
.actions { display: flex; justify-content: flex-end; gap: 13px; margin: 11px 19px 0 0; }

.click {
  position: absolute;
  left: 1717px;
  top: 353px;
  width: 28px;
  height: 28px;
  border-radius: 50%;
  background: radial-gradient(circle, #ee4a28 0, #f0694d 20%, rgba(245, 150, 130, 0.450) 45%, rgba(255, 230, 225, 0) 68%);
}
.pointer { position: absolute; left: 1730px; top: 367px; }
</style>
